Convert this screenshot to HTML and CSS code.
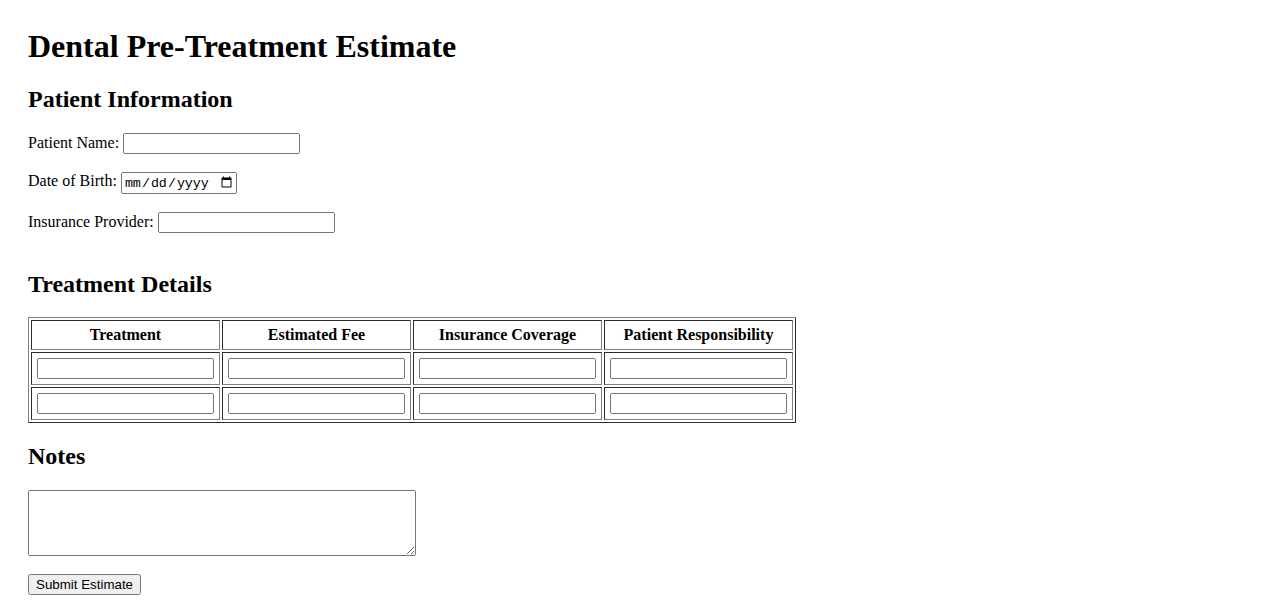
FILE: index.html
```html
<!DOCTYPE html>
<html lang="en">
<head>
    <meta charset="UTF-8">
    <meta name="viewport" content="width=device-width, initial-scale=1.0">
    <title>Dental Pre-Treatment Estimate</title>
    <link rel="stylesheet" href="styles.css">
</head>
<body>
<h1>Dental Pre-Treatment Estimate</h1>

<form action="#" method="POST" id="estimate-form">
    <!-- Patient info -->
    <h2>Patient Information</h2>
    <label for="patient-name">Patient Name:</label>
    <input type="text" id="patient-name" name="patientName"><br><br>

    <label for="dob">Date of Birth:</label>
    <input type="date" id="dob" name="dob"><br><br>

    <label for="insurance">Insurance Provider:</label>
    <input type="text" id="insurance" name="insurance"><br><br>

    <!-- Treatment table -->
    <h2>Treatment Details</h2>
    <table border="1" class="treatment-table">
        <thead>
        <tr>
            <th>Treatment</th>
            <th>Estimated Fee</th>
            <th>Insurance Coverage</th>
            <th>Patient Responsibility</th>
        </tr>
        </thead>
        <tbody>
        <tr>
            <td><input type="text" name="treatment[]"></td>
            <td><input type="text" name="fee[]"></td>
            <td><input type="text" name="coverage[]"></td>
            <td><input type="text" name="responsibility[]"></td>
        </tr>
        <tr>
            <td><input type="text" name="treatment[]"></td>
            <td><input type="text" name="fee[]"></td>
            <td><input type="text" name="coverage[]"></td>
            <td><input type="text" name="responsibility[]"></td>
        </tr>
        </tbody>
    </table>

    <!-- Notes -->
    <h2>Notes</h2>
    <textarea id="notes" name="notes" rows="4" cols="50" class="notes"></textarea>

    <button type="submit">Submit Estimate</button>
</form>
</body>
</html>
```

FILE: styles.css
```css
body {
    font-family: "Liberation Serif", "Times New Roman", serif;
    font-size: 16px;
    color: #000;
    background-color: #fff;
    margin: 0;
    padding: 28px;
}

h1 {
    margin-top: 0;
}

input,
button {
    font-family: "Liberation Sans", Arial, sans-serif;
    font-size: 13.333px;
}

input[type="text"] {
    width: 177px;
    box-sizing: border-box;
}

input[type="date"] {
    font-family: "Liberation Mono", "Courier New", monospace;
    width: 116px;
    box-sizing: border-box;
}

.treatment-table td,
.treatment-table th {
    padding: 5px;
}

.notes {
    display: block;
    font-family: "Liberation Mono", "Courier New", monospace;
    font-size: 13.333px;
    width: 388px;
    height: 66px;
    box-sizing: border-box;
    margin-bottom: 18px;
}
```
